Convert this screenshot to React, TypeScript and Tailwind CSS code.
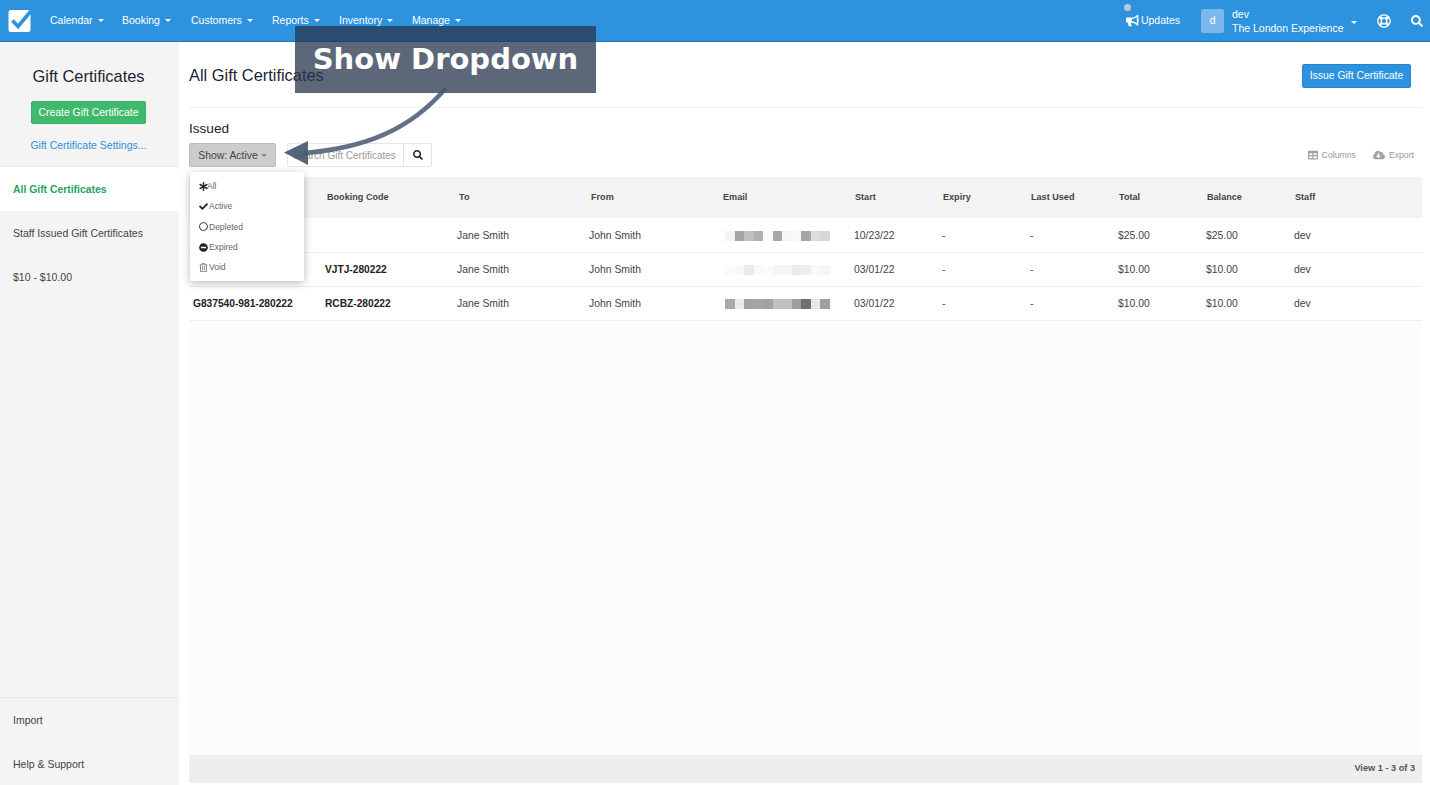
import React from "react";
import { FaAsterisk, FaBullhorn, FaCheck, FaCloudDownloadAlt, FaMinusCircle, FaRegCircle, FaRegLifeRing, FaRegTrashAlt, FaSearch, FaTable } from "react-icons/fa";

const Caret = ({ cls = "border-t-white" }: { cls?: string }) => (
  <span className={`inline-block w-0 h-0 border-x-[3px] border-x-transparent border-t-[3px] ${cls}`} />
);

const navItems = [
  { label: "Calendar", w: "w-[72px]" },
  { label: "Booking", w: "w-[69px]" },
  { label: "Customers", w: "w-[81px]" },
  { label: "Reports", w: "w-[67px]" },
  { label: "Inventory", w: "w-[73px]" },
  { label: "Manage", w: "w-[60px]" },
];

const columns = ["", "Booking Code", "To", "From", "Email", "Start", "Expiry", "Last Used", "Total", "Balance", "Staff"];
const gridCols = "grid grid-cols-[132px_132px_132px_132px_132px_88px_88px_88px_88px_88px_1fr]";

const rows = [
  {
    code: "", booking: "", start: "10/23/22", total: "$25.00", balance: "$25.00", h: "h-[35px] pt-[1px]",
    pixels: ["bg-[#f3f3f3]", "bg-[#a3a3a3]", "bg-[#c0c0c0]", "bg-[#b0b0b0]", "bg-[#fafafa]", "bg-[#a8a8a8]", "bg-[#f6f6f6]", "bg-[#f8f8f8]", "bg-[#a6a6a6]", "bg-[#dddddd]", "bg-[#d8d8d8]"],
  },
  {
    code: "", booking: "VJTJ-280222", start: "03/01/22", total: "$10.00", balance: "$10.00", h: "h-[34px]",
    pixels: ["bg-[#fafafa]", "bg-[#f9f9f9]", "bg-[#eaeaea]", "bg-[#f8f8f8]", "bg-[#fbfbfb]", "bg-[#f5f5f5]", "bg-[#f5f5f5]", "bg-[#ebebeb]", "bg-[#eeeeee]", "bg-[#fafafa]", "bg-[#f6f6f6]"],
  },
  {
    code: "G837540-981-280222", booking: "RCBZ-280222", start: "03/01/22", total: "$10.00", balance: "$10.00", h: "h-[34px]",
    pixels: ["bg-[#a8a8a8]", "bg-[#ebebeb]", "bg-[#a2a2a2]", "bg-[#a5a5a5]", "bg-[#a2a2a2]", "bg-[#c0c0c0]", "bg-[#c0c0c0]", "bg-[#a0a0a0]", "bg-[#707070]", "bg-[#e8e8e8]", "bg-[#a0a0a0]"],
  },
];

const menu = [
  { label: "All", icon: <FaAsterisk className="text-[9px] mr-[-1px] text-[#222]" /> },
  { label: "Active", icon: <FaCheck className="text-[9px] mr-[1px] text-[#222]" /> },
  { label: "Depleted", icon: <FaRegCircle className="text-[9px] mr-[1px] text-[#222]" /> },
  { label: "Expired", icon: <FaMinusCircle className="text-[9px] mr-[1px] text-[#222]" /> },
  { label: "Void", icon: <FaRegTrashAlt className="text-[9px] mr-[1px] text-[#777]" /> },
];

export default function App() {
  return (
    <div className="relative w-[1430px] h-[785px] overflow-hidden bg-white font-['Liberation_Sans',Arial,sans-serif] text-[#333]">
      {/* Top bar */}
      <header className="h-[42px] bg-[#2d93de] border-b border-[#1f77b8] flex items-center pl-2 pr-[7px] text-white text-[10.5px]">
        <svg width="24" height="24" viewBox="0 0 24 24" className="shrink-0">
          <rect x="0.5" y="1" width="22" height="22" rx="2.5" fill="#fff" />
          <path d="M4.5 11.5 L10 17.5 L22.5 2.5" fill="none" stroke="#2d93de" strokeWidth="3.6" />
        </svg>
        <nav className="flex ml-[18px]">
          {navItems.map((n) => (
            <div key={n.label} className={`${n.w} flex items-center gap-[5px]`}>
              <span>{n.label}</span>
              <Caret />
            </div>
          ))}
        </nav>
        <div className="ml-auto flex items-center">
          <div className="relative flex items-center gap-[2px] mr-[21px]">
            <span className="absolute left-[-2px] top-[-9px] w-[7px] h-[7px] rounded-full bg-[#c4c8cc]" />
            <FaBullhorn className="text-[13px]" />
            <span>Updates</span>
          </div>
          <div className="w-[23px] h-[24px] rounded-[2px] bg-[#7ab8ec] flex items-center justify-center text-[11px] mr-[8px]">d</div>
          <div className="leading-[14px] w-[111px] mt-[1px] whitespace-nowrap">
            <div>dev</div>
            <div>The London Experience</div>
          </div>
          <span className="ml-[8px] mr-[20px]"><Caret /></span>
          <FaRegLifeRing className="text-[14px]" />
          <FaSearch className="text-[12px] ml-[20px]" />
        </div>
      </header>

      <div className="flex h-[743px]">
        {/* Sidebar */}
        <aside className="w-[179px] shrink-0 bg-[#f4f4f4] flex flex-col">
          <div className="h-[125px] flex flex-col items-center border-b border-[#e8e8e8] pr-[2px]">
            <h1 className="mt-[25px] text-[16.4px] leading-[19px] text-[#1c2530]">Gift Certificates</h1>
            <button className="mt-[15px] w-[115px] h-[23px] rounded-[2px] bg-[#3fb96c] border border-[#38ae63] text-white text-[10.4px]">Create Gift Certificate</button>
            <a className="mt-[15px] text-[#2f8fd8] text-[10.5px] leading-[13px]">Gift Certificate Settings...</a>
          </div>
          <div className="h-[44px] bg-white flex items-center pl-[13px] pt-[1px] text-[10.4px] font-bold text-[#1fa463]">All Gift Certificates</div>
          <div className="h-[44px] flex items-center pl-[13px] pt-[1px] text-[10.5px] text-[#444]">Staff Issued Gift Certificates</div>
          <div className="h-[44px] flex items-center pl-[13px] pt-[1px] text-[10.5px] text-[#444]">$10 - $10.00</div>
          <div className="mt-auto border-t border-[#e8e8e8]">
            <div className="h-[44px] flex items-center pl-[13px] pt-[1px] text-[10.5px] text-[#444]">Import</div>
            <div className="h-[43px] flex items-center pl-[13px] pt-[2px] text-[10.5px] text-[#444]">Help &amp; Support</div>
          </div>
        </aside>

        {/* Main */}
        <main className="flex-1 flex flex-col pl-[10px] pr-[8px] min-w-0">
          <div className="h-[66px] shrink-0 flex items-center justify-between border-b border-[#f0f0f0] pr-[11px]">
            <h2 className="text-[16.4px] leading-[19px] text-[#1c2530] mt-[2px]">All Gift Certificates</h2>
            <button className="w-[109px] h-[24px] mt-[2px] pt-[1px] rounded-[2px] bg-[#2d93de] border border-[#2586cd] text-white text-[10.4px]">Issue Gift Certificate</button>
          </div>
          <div className="mt-[13px] mb-[1px] text-[13.6px] leading-[15px] text-[#222]">Issued</div>
          <div className="relative mt-[6px] h-[24px] flex items-center">
            <button className="w-[87px] h-[24px] rounded-[2px] pt-[1px] bg-[#cccccc] border border-[#bdbdbd] flex items-center justify-center gap-[3px] text-[10.4px] text-[#444]">
              Show: Active <Caret cls="border-t-[#888]" />
            </button>
            <div className="ml-[11px] flex h-[24px] border border-[#e6e6e6] rounded-[2px]">
              <div className="w-[115px] flex items-center pl-[5px] pt-[1px] text-[10px] text-[#999] whitespace-nowrap">Search Gift Certificates</div>
              <div className="w-[28px] flex items-center justify-center border-l border-[#e6e6e6]"><FaSearch className="text-[10px] text-[#222]" /></div>
            </div>
            <div className="ml-auto flex items-center text-[8.7px] text-[#999] pr-[8px] pt-[1px]">
              <FaTable className="text-[10px] mr-[4px] text-[#a0a0a0]" />
              <span>Columns</span>
              <FaCloudDownloadAlt className="text-[12px] ml-[17px] mr-[4px] text-[#a0a0a0]" />
              <span>Export</span>
            </div>
            {/* Dropdown */}
            <div className="absolute left-[1px] top-[29px] z-10 w-[114px] h-[109px] bg-white rounded-[2px] shadow-[0_2px_8px_rgba(0,0,0,0.28)] pt-[4px] pb-[1px] pl-[9px] flex flex-col text-[8.5px] text-[#666]">
              {menu.map((m) => (
                <div key={m.label} className="h-[20.4px] flex items-center">
                  {m.icon}
                  <span>{m.label}</span>
                </div>
              ))}
            </div>
          </div>

          {/* Table */}
          <div className="mt-[10px] flex-1 flex flex-col min-h-0 mb-[2px]">
            <div className={`${gridCols} h-[41px] shrink-0 bg-[#f3f3f3] items-center text-[9.1px] font-bold text-[#444]`}>
              {columns.map((c, i) => (
                <div key={i} className="pl-[6px]">{c}</div>
              ))}
            </div>
            {rows.map((r, i) => (
              <div key={i} className={`${gridCols} ${r.h} shrink-0 items-center border-b border-[#eeeeee] bg-white text-[10.4px] text-[#444]`}>
                <div className="pl-[4px] font-bold text-[10.2px] text-[#222]">{r.code}</div>
                <div className="pl-[4px] font-bold text-[10.2px] text-[#222]">{r.booking}</div>
                <div className="pl-[4px]">Jane Smith</div>
                <div className="pl-[4px]">John Smith</div>
                <div className="pl-[8px]">
                  <div className="flex">
                    {r.pixels.map((p, j) => (
                      <span key={j} className={`w-[9.55px] h-[10px] ${p}`} />
                    ))}
                  </div>
                </div>
                <div className="pl-[5px]">{r.start}</div>
                <div className="pl-[5px]">-</div>
                <div className="pl-[5px]">-</div>
                <div className="pl-[5px]">{r.total}</div>
                <div className="pl-[5px]">{r.balance}</div>
                <div className="pl-[5px]">dev</div>
              </div>
            ))}
            <div className="flex-1 bg-[#fcfcfc]" />
            <div className="h-[28px] shrink-0 bg-[#eeeeee] flex items-center justify-end pr-[7px] text-[9.2px] font-bold text-[#555]">View 1 - 3 of 3</div>
          </div>
        </main>
      </div>

      {/* Annotation */}
      <div className="absolute left-[295px] top-[26px] z-20 w-[301px] h-[67px] bg-[rgba(41,55,80,0.76)] flex items-center justify-center text-white font-['DejaVu_Sans',sans-serif] font-bold text-[29px]">
        Show Dropdown
      </div>
      <svg className="absolute left-0 top-0 z-30 pointer-events-none" width="1430" height="785" viewBox="0 0 1430 785">
        <path d="M446 88 C 410 130, 365 148, 304 153" fill="none" stroke="rgba(70,88,112,0.85)" strokeWidth="4.5" />
        <path d="M284 152.5 L308 141 L308 165 Z" fill="rgba(70,88,112,0.92)" />
      </svg>
    </div>
  );
}
